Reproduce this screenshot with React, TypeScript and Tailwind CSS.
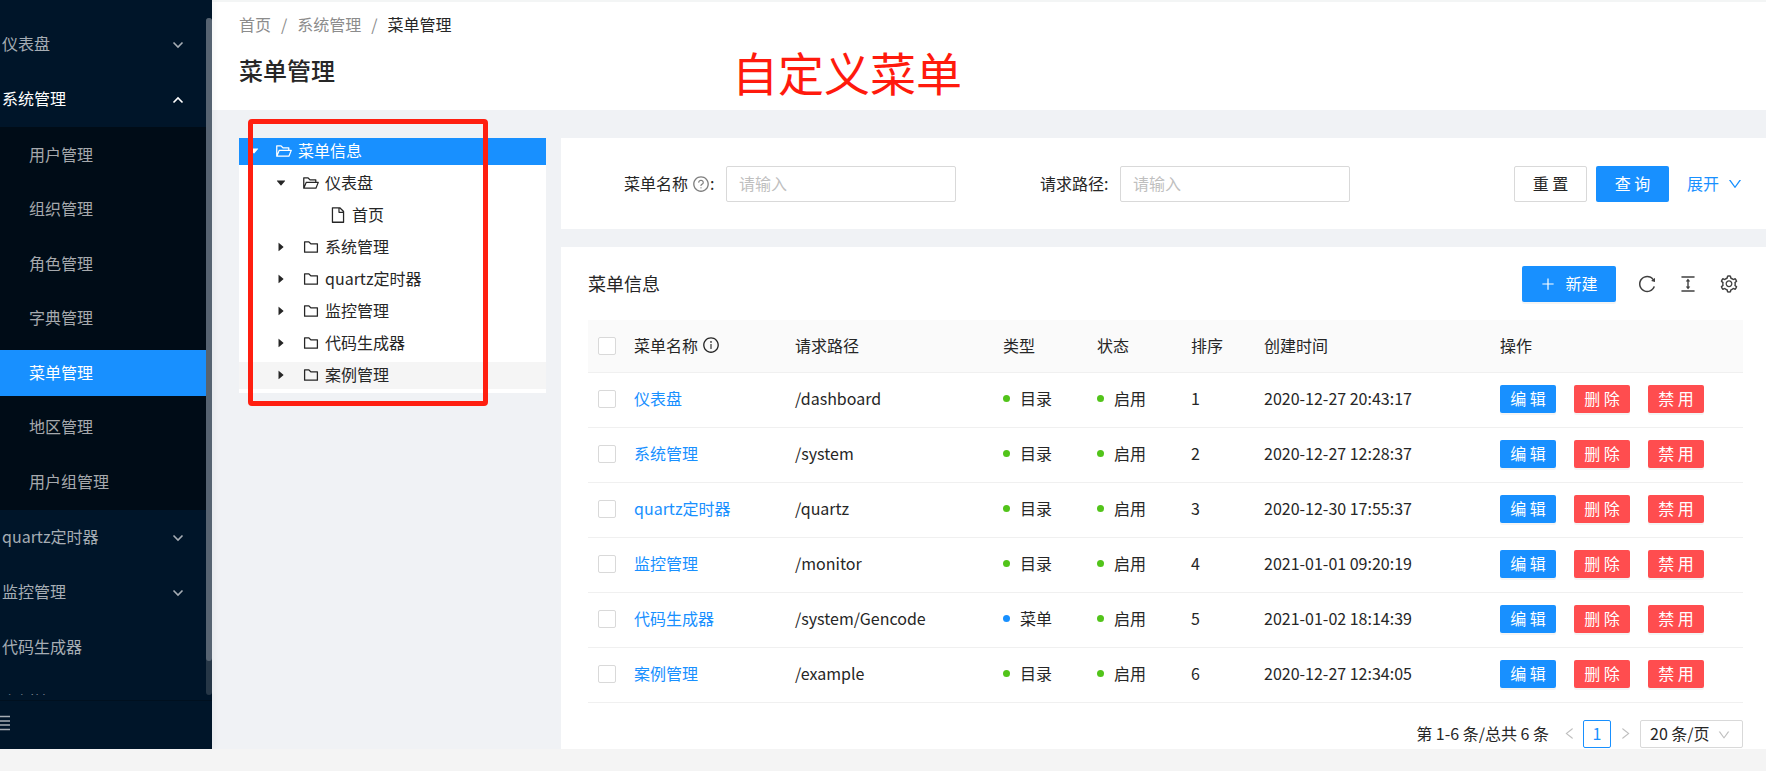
import type { ReactNode } from "react";
import {
  AiFillCaretDown,
  AiFillCaretRight,
  AiOutlineColumnHeight,
  AiOutlineDown,
  AiOutlineFile,
  AiOutlineFolder,
  AiOutlineFolderOpen,
  AiOutlineInfoCircle,
  AiOutlineLeft,
  AiOutlinePlus,
  AiOutlineQuestionCircle,
  AiOutlineReload,
  AiOutlineRight,
  AiOutlineSetting,
} from "react-icons/ai";

const subMenu = ["用户管理", "组织管理", "角色管理", "字典管理", "菜单管理", "地区管理", "用户组管理"];

function Arrow({ up = false }: { up?: boolean }) {
  return (
    <svg width="12" height="8" viewBox="0 0 12 8" fill="none" stroke="currentColor" strokeWidth="1.6" aria-hidden="true">
      <path d={up ? "M1.5 6.5 6 2l4.5 4.5" : "M1.5 1.5 6 6l4.5-4.5"} />
    </svg>
  );
}

function TopItem({ label, arrow, open = false }: { label: string; arrow?: boolean; open?: boolean }) {
  return (
    <a
      href="#"
      className={
        open
          ? "flex h-[55px] shrink-0 items-center justify-between pl-0.5 pr-[22px] text-white"
          : "flex h-[55px] shrink-0 items-center justify-between pl-0.5 pr-[22px] text-[#a6adb4]"
      }
    >
      <span className="pb-[3px]">{label}</span>
      {arrow && <Arrow up={open} />}
    </a>
  );
}

function Sidebar() {
  return (
    <aside className="relative z-10 flex w-[212px] shrink-0 flex-col bg-[#001529] shadow-[2px_0_8px_rgba(29,35,41,0.05)]">
      <div className="flex min-h-0 flex-1 overflow-hidden">
        <nav className="flex flex-1 flex-col overflow-hidden pt-[17px]">
          <TopItem label="仪表盘" arrow />
          <TopItem label="系统管理" arrow open />
          <ul className="flex h-[383px] shrink-0 flex-col justify-between bg-[#000c17] py-[5px]">
            {subMenu.map((label) => (
              <li key={label}>
                <a
                  href="#"
                  className={
                    label === "菜单管理"
                      ? "flex h-[46px] items-center bg-[#1890ff] pb-[3px] pl-[29px] text-white"
                      : "flex h-[46px] items-center pb-[3px] pl-[29px] text-[#a6a9ad]"
                  }
                >
                  {label}
                </a>
              </li>
            ))}
          </ul>
          <TopItem label="quartz定时器" arrow />
          <TopItem label="监控管理" arrow />
          <TopItem label="代码生成器" />
          <TopItem label="案例管理" />
        </nav>
        <div className="mt-[18px] flex w-1.5 flex-col rounded-full bg-[#263747]">
          <div className="h-[95%] rounded-full bg-[#566371]" />
        </div>
      </div>
      <div className="mt-[5px] flex h-[49px] items-center border-t border-[#00101f] text-[#a6adb4]">
        <button type="button" aria-label="收起菜单" className="mb-[5px]">
          <svg width="10" height="16" viewBox="0 0 10 16" stroke="currentColor" strokeWidth="1.5" aria-hidden="true">
            <path d="M0 1.5H10M0 6H10M0 10H10M0 14.5H10" />
          </svg>
        </button>
      </div>
    </aside>
  );
}

type NodeKind = "open" | "closed" | "file";
type TreeNode = { label: string; level: number; kind: NodeKind; tone?: "selected" | "hover" };

const tree: TreeNode[] = [
  { label: "菜单信息", level: 0, kind: "open", tone: "selected" },
  { label: "仪表盘", level: 1, kind: "open" },
  { label: "首页", level: 2, kind: "file" },
  { label: "系统管理", level: 1, kind: "closed" },
  { label: "quartz定时器", level: 1, kind: "closed" },
  { label: "监控管理", level: 1, kind: "closed" },
  { label: "代码生成器", level: 1, kind: "closed" },
  { label: "案例管理", level: 1, kind: "closed", tone: "hover" },
];

const tones = {
  selected: "flex h-[27px] items-center bg-[#1890ff] pb-px text-white",
  hover: "flex h-[27px] items-center bg-[#f5f5f5] pb-px",
  plain: "flex h-[27px] items-center pb-px",
};

function Tree() {
  return (
    <ul className="flex w-[307px] shrink-0 flex-col gap-[5px] self-start bg-white pb-1">
      {tree.map((n) => (
        <li key={n.label} className={tones[n.tone ?? "plain"]}>
          {n.level > 0 && <span className="w-[27px]" />}
          {n.level > 1 && <span className="w-[27px]" />}
          <span className="flex w-[27px] justify-center pl-0.5">
            {n.kind === "open" && <AiFillCaretDown size={12} />}
            {n.kind === "closed" && <AiFillCaretRight size={12} />}
          </span>
          <span className="flex w-8 justify-center pl-1">
            {n.kind === "open" && <AiOutlineFolderOpen size={18} />}
            {n.kind === "closed" && <AiOutlineFolder size={18} />}
            {n.kind === "file" && <AiOutlineFile size={18} />}
          </span>
          <a href="#" className="pb-[3px]">
            {n.label}
          </a>
        </li>
      ))}
    </ul>
  );
}

function Field({ id, label, help }: { id: string; label: string; help?: boolean }) {
  return (
    <div className="flex items-center">
      <label htmlFor={id} className="flex items-center">
        <span className="pb-0.5">{label}</span>
        {help && <AiOutlineQuestionCircle size={18} className="ml-1 text-[#7f7f7f]" />}
        <span className="w-4 pb-0.5">:</span>
      </label>
      <input
        id={id}
        placeholder="请输入"
        className="h-9 w-[230px] rounded-xs border border-[#d9d9d9] bg-white px-3 pb-0.5 outline-none placeholder:text-[#bfbfbf]"
      />
    </div>
  );
}

function SearchCard() {
  return (
    <form className="flex h-[91px] items-center bg-white pl-[63px] pr-[23px]">
      <div className="flex gap-[84px]">
        <Field id="menu-name" label="菜单名称" help />
        <Field id="menu-path" label="请求路径" />
      </div>
      <div className="ml-auto flex items-center">
        <button type="button" className="h-9 w-[73px] rounded-xs border border-[#d9d9d9] bg-white pb-0.5">
          重 置
        </button>
        <button type="button" className="ml-[9px] h-9 w-[73px] rounded-xs bg-[#1890ff] pb-0.5 text-white">
          查 询
        </button>
        <a href="#" className="ml-[18px] flex items-center gap-2 text-[#1890ff]">
          <span className="pb-0.5">展开</span>
          <AiOutlineDown size={16} />
        </a>
      </div>
    </form>
  );
}

type Row = { name: string; path: string; type: "目录" | "菜单"; order: number; time: string };

const rows: Row[] = [
  { name: "仪表盘", path: "/dashboard", type: "目录", order: 1, time: "2020-12-27 20:43:17" },
  { name: "系统管理", path: "/system", type: "目录", order: 2, time: "2020-12-27 12:28:37" },
  { name: "quartz定时器", path: "/quartz", type: "目录", order: 3, time: "2020-12-30 17:55:37" },
  { name: "监控管理", path: "/monitor", type: "目录", order: 4, time: "2021-01-01 09:20:19" },
  { name: "代码生成器", path: "/system/Gencode", type: "菜单", order: 5, time: "2021-01-02 18:14:39" },
  { name: "案例管理", path: "/example", type: "目录", order: 6, time: "2020-12-27 12:34:05" },
];

function Status({ blue = false, children }: { blue?: boolean; children: ReactNode }) {
  return (
    <span className="flex items-center gap-[10px]">
      <span className={blue ? "size-[7px] rounded-full bg-[#1890ff]" : "size-[7px] rounded-full bg-[#52c41a]"} />
      <span className="pb-0.5">{children}</span>
    </span>
  );
}

function Check({ label }: { label: string }) {
  return (
    <input
      type="checkbox"
      aria-label={label}
      className="ml-[10px] block size-[18px] appearance-none rounded-xs border border-[#d9d9d9] bg-white"
    />
  );
}

function TableCard() {
  return (
    <section className="flex-1 bg-white pl-[27px] pr-[23px]">
      <div className="flex h-[73px] items-center justify-between">
        <h2 className="pb-0.5 text-lg">菜单信息</h2>
        <div className="flex items-center gap-[21px] text-[#404040]">
          <button
            type="button"
            className="flex h-9 w-[94px] items-center justify-center gap-[9px] rounded-xs bg-[#1890ff] text-white shadow-[0_2px_0_rgba(0,0,0,0.045)]"
          >
            <AiOutlinePlus size={16} />
            <span className="pb-0.5">新建</span>
          </button>
          <button type="button" aria-label="刷新">
            <AiOutlineReload size={20} />
          </button>
          <button type="button" aria-label="密度">
            <AiOutlineColumnHeight size={20} />
          </button>
          <button type="button" aria-label="列设置" className="mr-1">
            <AiOutlineSetting size={20} />
          </button>
        </div>
      </div>
      <table className="w-full table-fixed text-left">
        <colgroup>
          <col className="w-[37px]" />
          <col className="w-[161px]" />
          <col className="w-[208px]" />
          <col className="w-[94px]" />
          <col className="w-[94px]" />
          <col className="w-[73px]" />
          <col className="w-[236px]" />
          <col />
        </colgroup>
        <thead>
          <tr className="h-[52px] border-b border-[#f0f0f0] bg-[#fafafa]">
            <th className="p-0">
              <Check label="全选" />
            </th>
            <th className="px-[9px] pb-0.5 font-normal">
              <span className="flex items-center gap-1">
                菜单名称
                <AiOutlineInfoCircle size={18} />
              </span>
            </th>
            <th className="px-[9px] pb-0.5 font-normal">请求路径</th>
            <th className="px-[9px] pb-0.5 font-normal">类型</th>
            <th className="px-[9px] pb-0.5 font-normal">状态</th>
            <th className="px-[9px] pb-0.5 font-normal">排序</th>
            <th className="px-[9px] pb-0.5 font-normal">创建时间</th>
            <th className="px-[9px] pb-0.5 font-normal">操作</th>
          </tr>
        </thead>
        <tbody>
          {rows.map((r) => (
            <tr key={r.name} className="h-[55px] border-b border-[#f0f0f0]">
              <td className="p-0 pb-0.5">
                <Check label={r.name} />
              </td>
              <td className="px-[9px] pb-1">
                <a href="#" className="text-[#1890ff]">
                  {r.name}
                </a>
              </td>
              <td className="px-[9px] pb-1">{r.path}</td>
              <td className="px-[9px] pb-0.5">
                <Status blue={r.type === "菜单"}>{r.type}</Status>
              </td>
              <td className="px-[9px] pb-0.5">
                <Status>启用</Status>
              </td>
              <td className="px-[9px] pb-1">{r.order}</td>
              <td className="px-[9px] pb-1">{r.time}</td>
              <td className="px-[9px] pb-0.5">
                <div className="flex gap-[18px] text-white">
                  <button
                    type="button"
                    className="h-7 w-14 rounded-xs bg-[#1890ff] pb-0.5 shadow-[0_2px_0_rgba(0,0,0,0.045)]"
                  >
                    编 辑
                  </button>
                  <button
                    type="button"
                    className="h-7 w-14 rounded-xs bg-[#ff4d4f] pb-0.5 shadow-[0_2px_0_rgba(0,0,0,0.045)]"
                  >
                    删 除
                  </button>
                  <button
                    type="button"
                    className="h-7 w-14 rounded-xs bg-[#ff4d4f] pb-0.5 shadow-[0_2px_0_rgba(0,0,0,0.045)]"
                  >
                    禁 用
                  </button>
                </div>
              </td>
            </tr>
          ))}
        </tbody>
      </table>
      <div className="mt-[17px] flex items-center justify-end">
        <span className="pb-0.5">第 1-6 条/总共 6 条</span>
        <button type="button" aria-label="上一页" className="flex w-[34px] justify-center pl-1.5 text-[#bfbfbf]">
          <AiOutlineLeft size={15} />
        </button>
        <button type="button" className="h-7 w-7 rounded-xs border border-[#1890ff] pb-0.5 text-[#1890ff]">
          1
        </button>
        <button type="button" aria-label="下一页" className="flex w-[29px] justify-center text-[#bfbfbf]">
          <AiOutlineRight size={15} />
        </button>
        <div className="relative">
          <select
            aria-label="每页条数"
            className="block h-7 w-[103px] appearance-none rounded-xs border border-[#d9d9d9] bg-white pb-0.5 pl-[9px] outline-none"
          >
            <option>20 条/页</option>
          </select>
          <AiOutlineDown size={14} className="pointer-events-none absolute right-3 top-[8px] text-[#bfbfbf]" />
        </div>
      </div>
    </section>
  );
}

export default function App() {
  return (
    <div className="relative flex h-screen flex-col overflow-hidden bg-[#f4f4f4] font-['Noto_Sans_CJK_SC',sans-serif] text-base leading-6 text-[#262626]">
      <div className="flex min-h-0 flex-1 overflow-hidden">
        <Sidebar />
        <main className="flex min-w-0 flex-1 flex-col bg-[#f0f2f5]">
          <header className="h-[110px] shrink-0 border-t-2 border-[#f3f5f5] bg-white pl-[27px] pt-[10px]">
            <nav className="flex gap-[10px] text-[#8c8c8c]">
              <a href="#">首页</a>
              <span>/</span>
              <a href="#">系统管理</a>
              <span>/</span>
              <span className="text-[#262626]">菜单管理</span>
            </nav>
            <h1 className="mt-[18px] text-2xl font-medium">菜单管理</h1>
          </header>
          <div className="flex min-h-0 flex-1 gap-[15px] pl-[27px] pt-[28px]">
            <Tree />
            <div className="flex min-w-0 flex-1 flex-col gap-[18px]">
              <SearchCard />
              <TableCard />
            </div>
          </div>
        </main>
      </div>
      <div className="h-[22px] shrink-0" />
      <p className="absolute left-[732px] top-[44px] z-20 text-[46px] leading-[54px] text-[#ff1a0d]">自定义菜单</p>
      <div className="pointer-events-none absolute left-[248px] top-[119px] z-20 h-[287px] w-[240px] rounded-[4px] border-[5px] border-[#ff1f10]" />
    </div>
  );
}
